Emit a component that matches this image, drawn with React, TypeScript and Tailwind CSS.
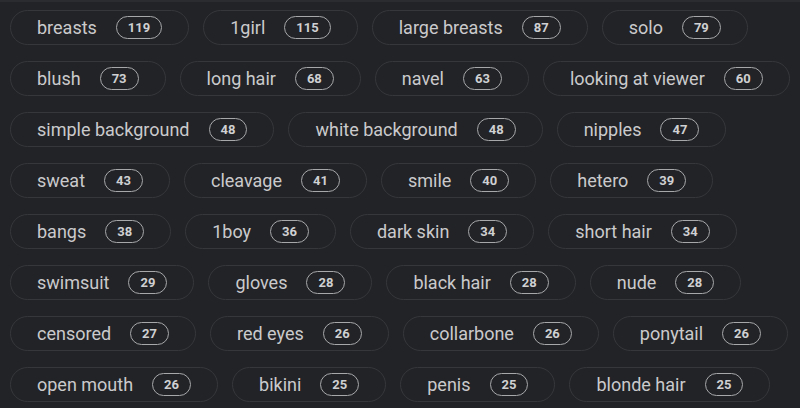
const rows: [string, number][][] = [
  [["breasts", 119], ["1girl", 115], ["large breasts", 87], ["solo", 79]],
  [["blush", 73], ["long hair", 68], ["navel", 63], ["looking at viewer", 60]],
  [["simple background", 48], ["white background", 48], ["nipples", 47]],
  [["sweat", 43], ["cleavage", 41], ["smile", 40], ["hetero", 39]],
  [["bangs", 38], ["1boy", 36], ["dark skin", 34], ["short hair", 34]],
  [["swimsuit", 29], ["gloves", 28], ["black hair", 28], ["nude", 28]],
  [["censored", 27], ["red eyes", 26], ["collarbone", 26], ["ponytail", 26]],
  [["open mouth", 26], ["bikini", 25], ["penis", 25], ["blonde hair", 25]],
];

const TagChip = ({ name, count }: { name: string; count: number }) => (
  <div className="flex h-[35px] items-center gap-[19px] rounded-full border border-[#36373b] px-[26px]">
    <span className="text-[18px] leading-none text-[#cacacc]">{name}</span>
    <span className="flex h-[23px] items-center rounded-full border-[1.5px] border-[#a7a8aa] px-[11px] text-[13px] font-bold leading-none text-[#cfd0d2]">
      {count}
    </span>
  </div>
);

export default function App() {
  return (
    <div
      className="min-h-[408px] w-[800px] overflow-hidden bg-[#222326]"
      style={{ fontFamily: "Roboto, 'Noto Sans', sans-serif" }}
    >
      <div className="h-[2px] bg-[#2b2c30]" />
      <div className="flex flex-col gap-[16px] pl-[10px] pt-[8px]">
        {rows.map((row, i) => (
          <div key={i} className="flex gap-[14px]">
            {row.map(([name, count]) => (
              <TagChip key={name} name={name} count={count} />
            ))}
          </div>
        ))}
      </div>
    </div>
  );
}
